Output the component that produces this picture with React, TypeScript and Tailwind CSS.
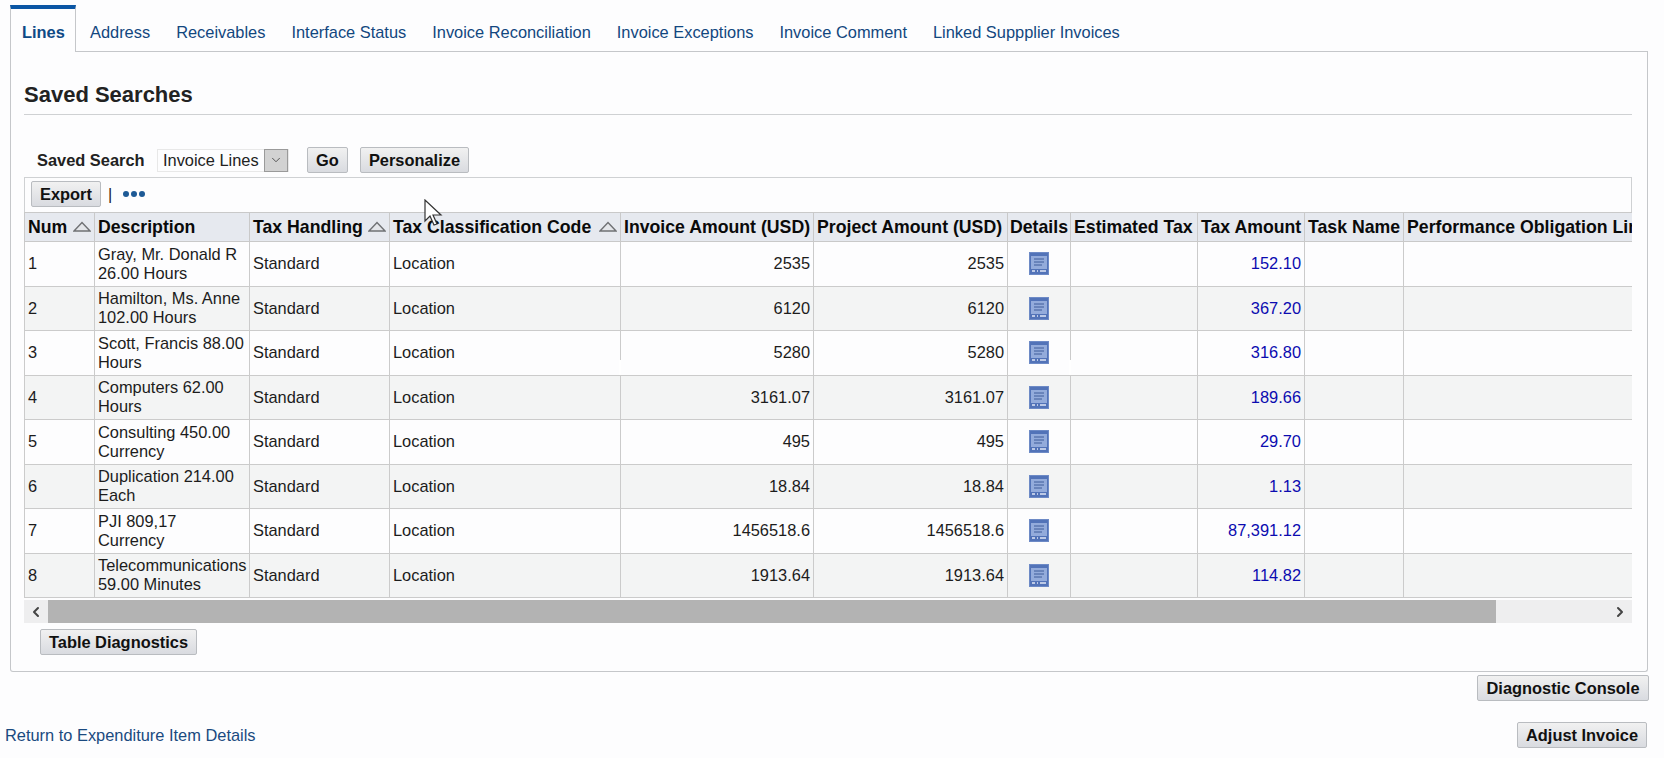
import { ChevronDown, ChevronLeft, ChevronRight } from "lucide-react";

const tabs = [
  "Address",
  "Receivables",
  "Interface Status",
  "Invoice Reconciliation",
  "Invoice Exceptions",
  "Invoice Comment",
  "Linked Suppplier Invoices",
];

const rows = [
  { num: 1, desc: "Gray, Mr. Donald R 26.00 Hours", inv: "2535", tax: "152.10" },
  { num: 2, desc: "Hamilton, Ms. Anne 102.00 Hours", inv: "6120", tax: "367.20" },
  { num: 3, desc: "Scott, Francis 88.00 Hours", inv: "5280", tax: "316.80" },
  { num: 4, desc: "Computers 62.00 Hours", inv: "3161.07", tax: "189.66" },
  { num: 5, desc: "Consulting 450.00 Currency", inv: "495", tax: "29.70" },
  { num: 6, desc: "Duplication 214.00 Each", inv: "18.84", tax: "1.13" },
  { num: 7, desc: "PJI 809,17 Currency", inv: "1456518.6", tax: "87,391.12" },
  { num: 8, desc: "Telecommunications 59.00 Minutes", inv: "1913.64", tax: "114.82" },
];

function Btn({ label, className = "" }: { label: string; className?: string }) {
  return (
    <button
      className={`h-[26px] rounded-[2px] border border-[#b9bcc0] bg-gradient-to-b from-[#f1f1f1] to-[#d9dbe0] text-[16.4px] font-bold leading-none text-[#111] ${className}`}
    >
      {label}
    </button>
  );
}

function SortArrow() {
  return (
    <svg width="18" height="11" viewBox="0 0 18 11" className="shrink-0">
      <path d="M1 10 L9 1.5 L17 10 Z" fill="#e4e6ea" stroke="#6f7174" strokeWidth="1.4" />
    </svg>
  );
}

function DetailsIcon() {
  return (
    <svg width="20" height="23" viewBox="0 0 20 23" className="mx-auto block">
      <rect x="0.5" y="0.5" width="19" height="22" fill="#5273b8" stroke="#6d8ac6" />
      <rect x="2" y="4" width="16" height="13" fill="#93abdb" />
      <path d="M5 7h10M5 10h10M5 13h8" stroke="#3f5c9a" strokeWidth="1" />
      <path d="M3 19h3M8 19h1M11 19h6" stroke="#dfe6f5" strokeWidth="1.4" />
    </svg>
  );
}

function Th({ label, sort, tight }: { label: string; sort?: boolean; tight?: boolean }) {
  return (
    <th
      className={`border border-[#c9c9c9] bg-[#e6e9ef] text-left text-[17.7px] font-bold whitespace-nowrap text-[#0a0a0a] ${
        tight ? "px-[2px]" : "px-[3px]"
      }`}
    >
      <div className="flex items-center justify-between">
        {label}
        {sort && <SortArrow />}
      </div>
    </th>
  );
}

// gif artefact: the column rule drops out at the bottom of row 3
function Cut() {
  return <span className="absolute bottom-0 right-[-1px] h-[15px] w-[2px] bg-white" />;
}

export default function App() {
  const td = "relative border border-[#cbcbcb] px-[3px] text-[16.4px] leading-[19px] text-[#1c1c1c]";

  return (
    <div className="h-[758px] w-[1664px] overflow-hidden bg-[#fdfdfe] pt-[5px] font-['Liberation_Sans',Arial,sans-serif]">
      {/* Tabs */}
      <div className="ml-[10px] flex h-[47px] w-[1638px]">
        <div className="w-[66px] border-x border-t-[4px] border-x-[#c5c7ca] border-t-[#0b56a4] pl-[11px] pt-[14px] text-[16.4px] leading-[19px] font-bold text-[#0e4a86]">
          Lines
        </div>
        <div className="flex flex-1 gap-[26px] border-b border-[#c5c7ca] pl-[14px] pt-[18px] text-[16.4px] leading-[19px] text-[#12477f]">
          {tabs.map((t) => (
            <span key={t}>{t}</span>
          ))}
        </div>
      </div>

      {/* Panel */}
      <div className="ml-[10px] h-[620px] w-[1638px] rounded-b-[3px] border-x border-b border-[#c5c7ca] pl-[13px] pr-[15px] pt-[29px]">
        <h2 className="h-[34px] border-b border-[#cfd1d3] text-[22px] leading-[28px] font-bold text-[#222]">
          Saved Searches
        </h2>

        <div className="mt-[32px] flex h-[26px] items-center pl-[13px]">
          <span className="w-[120px] text-[16.4px] font-bold text-[#222]">Saved Search</span>
          <div className="flex h-[23px] w-[132px] items-center justify-between border border-[#e8e8e8] pl-[5px] text-[16.4px] text-[#222]">
            Invoice Lines
            <span className="flex h-[23px] w-[24px] items-center justify-center border border-[#9a9a9a] bg-[#d2d2d2]">
              <ChevronDown size={14} strokeWidth={1.5} className="text-[#444]" />
            </span>
          </div>
          <Btn label="Go" className="ml-[18px] w-[41px]" />
          <Btn label="Personalize" className="ml-[12px] w-[109px]" />
        </div>

        <div className="mt-[4px] flex h-[35px] items-center border border-b-0 border-[#cfd1d3] pb-[2px] pl-[6px]">
          <Btn label="Export" className="w-[70px]" />
          <span className="ml-[7px] text-[16.4px] text-[#222]">|</span>
          <span className="ml-[11px] flex gap-[2px]">
            <i className="size-[6px] rounded-full bg-[#1d5a96]" />
            <i className="size-[6px] rounded-full bg-[#1d5a96]" />
            <i className="size-[6px] rounded-full bg-[#1d5a96]" />
          </span>
        </div>

        {/* Lines table */}
        <div className="w-[1608px] overflow-hidden">
          <table className="w-[1690px] table-fixed border-collapse">
            <colgroup>
              <col className="w-[70px]" />
              <col className="w-[155px]" />
              <col className="w-[140px]" />
              <col className="w-[231px]" />
              <col className="w-[193px]" />
              <col className="w-[194px]" />
              <col className="w-[63px]" />
              <col className="w-[127px]" />
              <col className="w-[107px]" />
              <col className="w-[99px]" />
              <col className="w-[311px]" />
            </colgroup>
            <thead>
              <tr className="h-[29px]">
                <Th label="Num" sort />
                <Th label="Description" />
                <Th label="Tax Handling" sort />
                <Th label="Tax Classification Code" sort />
                <Th label="Invoice Amount (USD)" />
                <Th label="Project Amount (USD)" />
                <Th label="Details" tight />
                <Th label="Estimated Tax" />
                <Th label="Tax Amount" />
                <Th label="Task Name" />
                <Th label="Performance Obligation Line" />
              </tr>
            </thead>
            <tbody>
              {rows.map((r) => (
                <tr key={r.num} className={`h-[44.5px] ${r.num % 2 === 0 ? "bg-[#f3f4f4]" : "bg-[#fdfdfe]"}`}>
                  <td className={td}>{r.num}</td>
                  <td className={td}>{r.desc}</td>
                  <td className={td}>Standard</td>
                  <td className={td}>
                    Location
                    {r.num === 3 && <Cut />}
                  </td>
                  <td className={`${td} text-right`}>{r.inv}</td>
                  <td className={`${td} text-right`}>{r.inv}</td>
                  <td className={td}>
                    <DetailsIcon />
                    {r.num === 3 && <Cut />}
                  </td>
                  <td className={td} />
                  <td className={`${td} text-right !text-[#0b0bb0]`}>{r.tax}</td>
                  <td className={td} />
                  <td className={td} />
                </tr>
              ))}
            </tbody>
          </table>
        </div>

        {/* Horizontal scrollbar */}
        <div className="mt-[2px] flex h-[23px] w-[1608px] items-center bg-[#eeeeef]">
          <span className="flex w-[24px] justify-center">
            <ChevronLeft size={16} strokeWidth={3} className="text-[#444]" />
          </span>
          <div className="h-full w-[1448px] bg-[#b3b3b3]" />
          <span className="ml-auto flex w-[24px] justify-center">
            <ChevronRight size={16} strokeWidth={3} className="text-[#444]" />
          </span>
        </div>

        <Btn label="Table Diagnostics" className="ml-[16px] mt-[6px] w-[157px]" />
      </div>

      {/* Footer actions */}
      <div className="mt-[3px] flex w-[1649px] justify-end">
        <Btn label="Diagnostic Console" className="w-[172px]" />
      </div>
      <div className="mt-[21px] flex w-[1647px] items-center justify-between pl-[5px]">
        <a className="text-[16.4px] text-[#1a4a80]">Return to Expenditure Item Details</a>
        <Btn label="Adjust Invoice" className="w-[130px]" />
      </div>

      {/* Mouse pointer captured in the recording */}
      <svg width="20" height="28" viewBox="0 0 20 28" className="absolute left-[424px] top-[199px]">
        <path d="M1 1 L1 22 L6 17 L10 26 L13 25 L9 16 L17 16 Z" fill="#fff" stroke="#333" strokeWidth="1.2" />
      </svg>
    </div>
  );
}
